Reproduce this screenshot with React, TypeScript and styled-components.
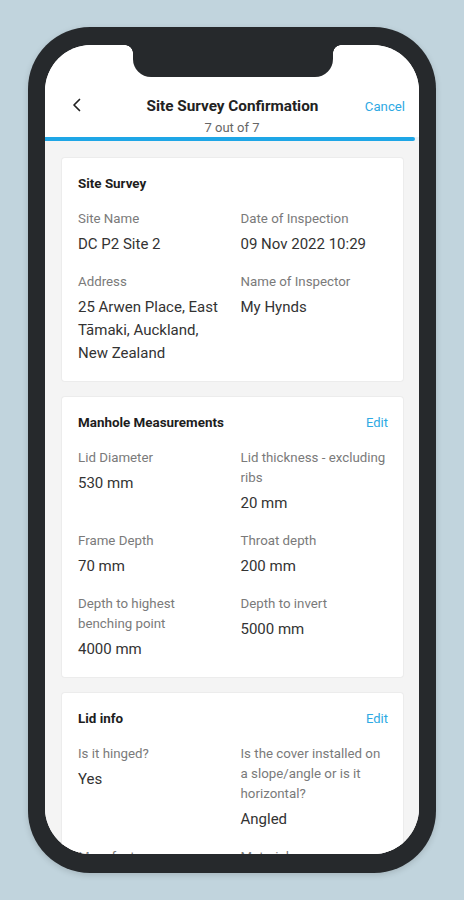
import React from "react";
import styled, { createGlobalStyle } from "styled-components";

const Global = createGlobalStyle`
  html, body { margin: 0; padding: 0; background: #c1d4dd; }
  body { font-family: Roboto, "Liberation Sans", Arial, sans-serif; -webkit-font-smoothing: antialiased; }
  * { box-sizing: border-box; }
`;

const Page = styled.div`
  width: 464px;
  height: 900px;
  padding: 27px 0 0 28px;
  background: #c1d4dd;
  overflow: hidden;
`;

const Phone = styled.div`
  position: relative;
  width: 408px;
  height: 846px;
  background: #26292c;
  border-radius: 62px;
  padding: 18px 17px 19px 17px;
  box-shadow: 0 2px 6px rgba(0, 0, 0, 0.15);
`;

const Notch = styled.div`
  position: absolute;
  top: 0;
  left: 105px;
  width: 200px;
  height: 50px;
  background: #26292c;
  border-radius: 0 0 18px 18px;
  z-index: 2;

  &::before,
  &::after {
    content: "";
    position: absolute;
    top: 18px;
    width: 8px;
    height: 8px;
  }
  &::before {
    left: -8px;
    background: radial-gradient(circle at 0 100%, transparent 7.5px, #26292c 8px);
  }
  &::after {
    right: -8px;
    background: radial-gradient(circle at 100% 100%, transparent 7.5px, #26292c 8px);
  }
`;

const Screen = styled.div`
  width: 374px;
  height: 809px;
  background: #ffffff;
  border-radius: 46px;
  overflow: hidden;
  display: flex;
  flex-direction: column;
`;

const Header = styled.header`
  padding-top: 50px;
  background: #fff;
  display: flex;
  flex-direction: column;
`;

const TopRow = styled.div`
  display: grid;
  grid-template-columns: 1fr auto 1fr;
  align-items: center;
  padding: 0 14px;
  height: 20px;
`;

const BackButton = styled.button`
  justify-self: start;
  border: none;
  background: none;
  padding: 0;
  margin: -3px 0 0 13px;
  display: flex;
  align-items: center;
  color: #222;
`;

const Title = styled.h1`
  margin: 0 0 0 1px;
  font-size: 15.3px;
  font-weight: 700;
  color: #222;
  line-height: 20px;
  text-align: center;
`;

const Cancel = styled.span`
  justify-self: end;
  font-size: 13.2px;
  color: #2ea9e3;
  line-height: 20px;
  margin-top: 2px;
`;

const Subtitle = styled.div`
  margin-top: 4px;
  text-align: center;
  font-size: 13px;
  line-height: 18px;
  color: #666;
`;

const Progress = styled.div`
  height: 4px;
  background: #eef3f6;
`;

const ProgressFill = styled.div`
  height: 4px;
  background: #1ea6e6;
  border-radius: 0 2px 2px 0;
`;

const Content = styled.main`
  flex: 1;
  background: #f4f4f4;
  padding: 17px 16px 0 17px;
  display: flex;
  flex-direction: column;
  gap: 16px;
`;

const Card = styled.section`
  background: #fff;
  border-radius: 3px;
  box-shadow: 0 0 0 1px #ececec;
  padding: 16px;
`;

const CardHead = styled.div`
  display: flex;
  justify-content: space-between;
  align-items: center;
  height: 20px;
  margin-bottom: 15px;
`;

const CardTitle = styled.h2`
  margin: 0;
  font-size: 13.4px;
  font-weight: 700;
  color: #1d1d1d;
  line-height: 20px;
`;

const EditLink = styled.span`
  font-size: 13px;
  color: #2ea9e3;
  line-height: 20px;
  margin-right: -1px;
`;

const Grid = styled.div`
  display: grid;
  grid-template-columns: 1fr 1fr;
  column-gap: 16px;
  row-gap: 16px;
`;

const Field = styled.div`
  display: flex;
  flex-direction: column;
  gap: 4px;
`;

const Label = styled.div`
  font-size: 13.3px;
  line-height: 20px;
  color: #7a7a7a;
`;

const Value = styled.div`
  font-size: 15px;
  line-height: 23px;
  color: #333;
`;

type Item = { label: string; value: string };

const sections: { title: string; edit: boolean; items: Item[] }[] = [
  {
    title: "Site Survey",
    edit: false,
    items: [
      { label: "Site Name", value: "DC P2 Site 2" },
      { label: "Date of Inspection", value: "09 Nov 2022 10:29" },
      { label: "Address", value: "25 Arwen Place, East Tāmaki, Auckland, New Zealand" },
      { label: "Name of Inspector", value: "My Hynds" },
    ],
  },
  {
    title: "Manhole Measurements",
    edit: true,
    items: [
      { label: "Lid Diameter", value: "530 mm" },
      { label: "Lid thickness - excluding ribs", value: "20 mm" },
      { label: "Frame Depth", value: "70 mm" },
      { label: "Throat depth", value: "200 mm" },
      { label: "Depth to highest benching point", value: "4000 mm" },
      { label: "Depth to invert", value: "5000 mm" },
    ],
  },
  {
    title: "Lid info",
    edit: true,
    items: [
      { label: "Is it hinged?", value: "Yes" },
      { label: "Is the cover installed on a slope/angle or is it horizontal?", value: "Angled" },
      { label: "Manufacturer", value: "Hynds" },
      { label: "Material", value: "Cast Iron" },
    ],
  },
];

export default function App() {
  return (
    <>
      <Global />
      <Page>
        <Phone>
          <Notch />
          <Screen>
            <Header>
              <TopRow>
                <BackButton aria-label="Back">
                  <svg width="10" height="14" viewBox="0 0 10 14">
                    <polyline points="7.5,1.5 2,7 7.5,12.5" fill="none" stroke="#222" strokeWidth="1.7" strokeLinecap="round" strokeLinejoin="round" />
                  </svg>
                </BackButton>
                <Title>Site Survey Confirmation</Title>
                <Cancel>Cancel</Cancel>
              </TopRow>
              <Subtitle>7 out of 7</Subtitle>
              <Progress>
                <ProgressFill style={{ width: "99%" }} />
              </Progress>
            </Header>
            <Content>
              {sections.map((s) => (
                <Card key={s.title}>
                  <CardHead>
                    <CardTitle>{s.title}</CardTitle>
                    {s.edit && <EditLink>Edit</EditLink>}
                  </CardHead>
                  <Grid>
                    {s.items.map((it) => (
                      <Field key={it.label}>
                        <Label>{it.label}</Label>
                        <Value>{it.value}</Value>
                      </Field>
                    ))}
                  </Grid>
                </Card>
              ))}
            </Content>
          </Screen>
        </Phone>
      </Page>
    </>
  );
}
